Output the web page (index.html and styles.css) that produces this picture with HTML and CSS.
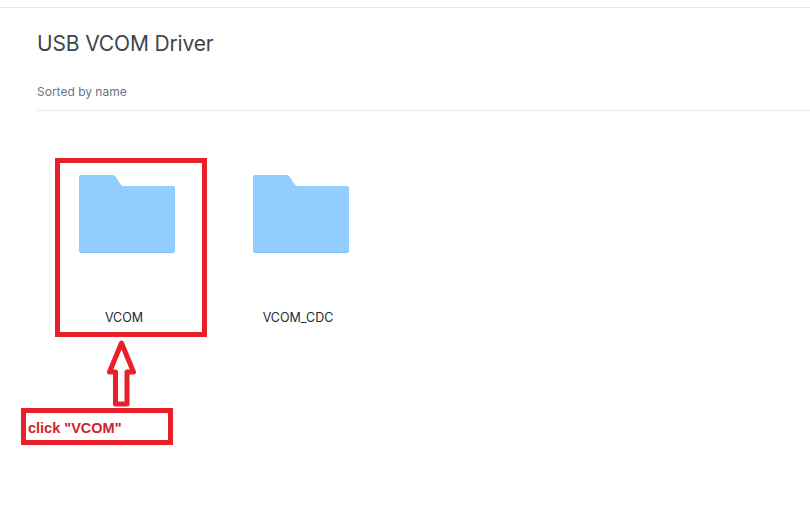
FILE: index.html
```html
<!DOCTYPE html>
<html>
<head>
  <title>USB VCOM Driver</title>
  <link rel="stylesheet" href="styles.css">
</head>
<body>
  <div id="page">
    <h1>USB VCOM Driver</h1>
    <div class="sort-bar">Sorted by name</div>

    <div class="folders">
      <div class="folder">
        <svg class="folder-icon" width="96" height="78" viewBox="0 0 96 78">
          <path fill="#7fbcf0" d="M0 3a3 3 0 0 1 3-3h29c2.500 0 4 1 5 2.500l4 6.500c1 1.500 2 2 4 2h48a3 3 0 0 1 3 3v61a3 3 0 0 1-3 3H3a3 3 0 0 1-3-3z"/>
          <path fill="#92ceff" d="M0 3a3 3 0 0 1 3-3h29c2.500 0 4 1 5 2.500l4 6.500c1 1.500 2 2 4 2h48a3 3 0 0 1 3 3v60a3 3 0 0 1-3 3H3a3 3 0 0 1-3-3z"/>
        </svg>
        <div class="folder-name">VCOM</div>
      </div>
      <div class="folder">
        <svg class="folder-icon" width="96" height="78" viewBox="0 0 96 78">
          <path fill="#7fbcf0" d="M0 3a3 3 0 0 1 3-3h29c2.500 0 4 1 5 2.500l4 6.500c1 1.500 2 2 4 2h48a3 3 0 0 1 3 3v61a3 3 0 0 1-3 3H3a3 3 0 0 1-3-3z"/>
          <path fill="#92ceff" d="M0 3a3 3 0 0 1 3-3h29c2.500 0 4 1 5 2.500l4 6.500c1 1.500 2 2 4 2h48a3 3 0 0 1 3 3v60a3 3 0 0 1-3 3H3a3 3 0 0 1-3-3z"/>
        </svg>
        <div class="folder-name">VCOM_CDC</div>
      </div>
    </div>
  </div>

  <!-- red annotations drawn over the screenshot -->
  <div class="mark mark-folder"></div>
  <svg class="mark-arrow" width="32" height="72" viewBox="0 0 32 72">
    <path fill="none" stroke="#e8202b" stroke-width="5" stroke-linejoin="round" d="M16.500 6 L28.500 35 H22 V67 H10.500 V35 H4.500 Z"/>
  </svg>
  <div class="mark mark-note">click "VCOM"</div>
</body>
</html>
```

FILE: styles.css
```css
body {
  margin: 0;
  background-color: white;
  font-family: Inter, Arial, sans-serif;
  color: #3d464d;
  overflow: hidden;
}

#page {
  margin-top: 7px;
  border-top: 1px solid #e6e8ea;
  padding-left: 37px;
}

h1 {
  margin: 0;
  padding-top: 22px;
  font-size: 21px;
  line-height: 28px;
  font-weight: 400;
  letter-spacing: -0.15px;
}

.sort-bar {
  margin-top: 25px;
  padding-bottom: 9px;
  border-bottom: 1px solid #e6e8ea;
  font-size: 12px;
  line-height: 18px;
  color: #6a7681;
}

.folders {
  display: flex;
  padding-top: 64px;
}

.folder {
  width: 174px;
}

.folder-icon {
  display: block;
  margin-left: 42px;
}

.folder-name {
  margin-top: 57px;
  font-size: 12.500px;
  line-height: 16px;
  text-align: center;
  color: #1e2a35;
}

.mark {
  position: absolute;
  box-sizing: border-box;
  border: 5px solid #e8202b;
}

.mark-folder {
  left: 55px;
  top: 158px;
  width: 152px;
  height: 179px;
}

.mark-arrow {
  position: absolute;
  left: 105px;
  top: 337px;
}

.mark-note {
  left: 21px;
  top: 408px;
  width: 152px;
  height: 37px;
  padding-left: 2px;
  font-family: "Liberation Sans", Arial, sans-serif;
  font-size: 14.500px;
  font-weight: 700;
  line-height: 30px;
  color: #d2232a;
}
```
